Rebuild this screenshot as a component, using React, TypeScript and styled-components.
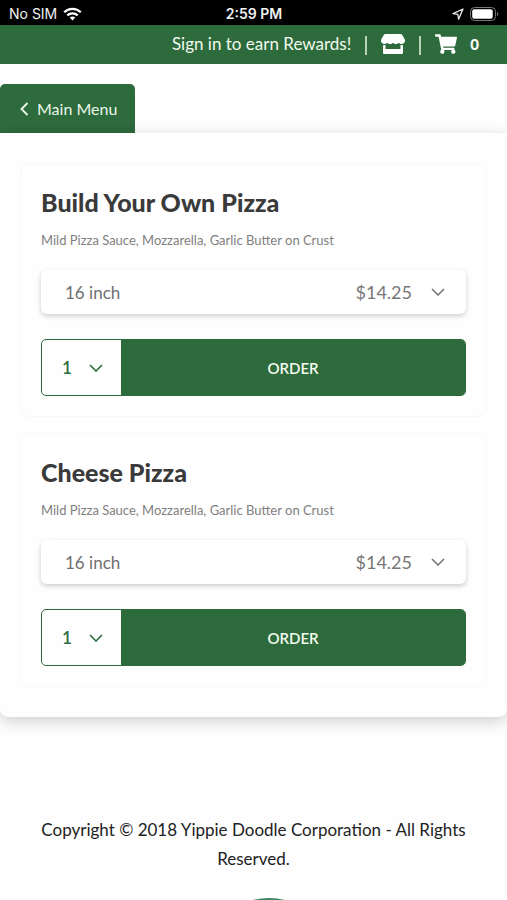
import React from 'react';
import styled, { createGlobalStyle } from 'styled-components';
import { FaShoppingCart, FaStore } from 'react-icons/fa';

const green = '#2d6a3c';

const GlobalStyle = createGlobalStyle`
  *, *::before, *::after { box-sizing: border-box; }
  html { background: #fefefe; }
  body {
    margin: 0;
    overflow-x: hidden;
    font-family: Lato, "Liberation Sans", sans-serif;
    color: #222;
  }
  h2, p { margin: 0; }
  button, select { font: inherit; }
`;

const StatusBar = styled.div`
  display: grid;
  grid-template-columns: 1fr auto 1fr;
  align-items: center;
  height: 25px;
  padding: 2px 8px 0 9px;
  background: #000;
  color: #f2f2f2;
  font-family: Inter, "Liberation Sans", sans-serif;
  font-size: 14px;
  line-height: 20px;
`;

const StatusGroup = styled.div<{ $end?: boolean }>`
  display: flex;
  align-items: center;
  justify-content: ${(p) => (p.$end ? 'flex-end' : 'flex-start')};
  gap: 6px;
`;

const Clock = styled.time`
  font-weight: 600;
`;

const TopBar = styled.header`
  display: flex;
  align-items: center;
  justify-content: flex-end;
  height: 39px;
  padding: 0 28px 2px;
  background: ${green};
  color: #f1faee;
`;

const SignInLink = styled.a`
  color: inherit;
  font-size: 17px;
  line-height: 24px;
  text-decoration: none;
  white-space: nowrap;
`;

const Separator = styled.span`
  width: 2px;
  height: 19px;
  margin: 3px 14px 0;
  background: #b9d3b8;
`;

const IconLink = styled.a`
  display: flex;
  align-items: center;
  gap: 13px;
  color: #fff;
  font-size: 15px;
  font-weight: 900;
  line-height: 20px;
  text-decoration: none;
`;

const TabRow = styled.nav`
  display: flex;
  padding-top: 20px;
`;

const MenuTab = styled.a`
  display: flex;
  align-items: center;
  gap: 8px;
  height: 49px;
  padding: 0 18px 0 19px;
  border-radius: 5px 5px 0 0;
  background: ${green};
  color: #e9f6e8;
  font-size: 16px;
  text-decoration: none;
`;

const Panel = styled.main`
  display: grid;
  gap: 16px;
  padding: 30px 20px;
  border-radius: 0 0 8px 8px;
  background: #fefefe;
  box-shadow: 0 4px 16px rgba(0, 0, 0, 0.2);
  clip-path: inset(-14px -20px -30px);
`;

const Card = styled.article`
  padding: 20px 20px 20px;
  border: 1px solid #f7f7f7;
  border-radius: 10px;
`;

const Title = styled.h2`
  color: #3a3a3a;
  font-size: 25px;
  font-weight: 900;
  line-height: 36px;
`;

const Description = styled.p`
  margin-top: 10px;
  color: #808080;
  font-size: 13px;
  line-height: 20px;
`;

const SizeField = styled.label`
  display: grid;
  grid-template-columns: 1fr auto auto;
  align-items: center;
  height: 44px;
  margin-top: 20px;
  padding-right: 21px;
  border-radius: 6px;
  background: #fff;
  box-shadow: 0 2px 5px rgba(0, 0, 0, 0.2);
  color: #777;
  font-size: 17px;
`;

const PlainSelect = styled.select<{ $tone: string; $inset: number }>`
  grid-area: 1 / 1 / 2 / -1;
  width: 100%;
  height: 100%;
  padding: 0 0 0 ${(p) => p.$inset}px;
  border: 0;
  background: transparent;
  color: ${(p) => p.$tone};
  appearance: none;
  cursor: pointer;
`;

const Price = styled.span`
  grid-area: 1 / 2;
  font-size: 18px;
  pointer-events: none;
`;

const ChevronSlot = styled.span<{ $column: number }>`
  grid-area: 1 / ${(p) => p.$column};
  display: flex;
  margin-left: 19px;
  pointer-events: none;
`;

const OrderRow = styled.form`
  display: flex;
  height: 57px;
  margin-top: 25px;
  overflow: hidden;
  border: 1px solid ${green};
  border-radius: 5px;
`;

const QuantityField = styled.label`
  display: grid;
  grid-template-columns: 1fr auto;
  align-items: center;
  flex: 0 0 79px;
  padding-right: 18px;
  font-size: 17px;
  font-weight: 600;
`;

const OrderButton = styled.button`
  flex: 1;
  border: 0;
  background: ${green};
  color: #f4fbef;
  font-size: 15px;
  font-weight: 600;
  cursor: pointer;
`;

const Footer = styled.footer`
  display: flex;
  flex-direction: column;
  align-items: center;
  padding: 98px 30px 0;
  font-size: 17px;
  line-height: 29px;
  text-align: center;
`;

const FooterLogo = styled.svg`
  display: block;
  margin-top: 25px;
`;

const WifiIcon = () => (
  <svg width="19" height="14" viewBox="0 0 19 14" fill="none" stroke="#fff" strokeWidth="2.3" aria-hidden="true">
    <path d="M1.2 5.3C5.8.7 13.2.7 17.8 5.3" />
    <path d="M4.3 8.4c2.9-2.8 7.5-2.8 10.4 0" />
    <path d="M6.7 10.6c1.6-1.5 4-1.5 5.6 0L9.5 13.6z" fill="#fff" stroke="none" />
  </svg>
);

const LocationIcon = () => (
  <svg width="12" height="12" viewBox="0 0 12 12" fill="none" stroke="#e8e8e8" strokeWidth="1.3" strokeLinejoin="round" aria-hidden="true">
    <path d="M11 1 1 5.6l4.9.7.7 4.9z" />
  </svg>
);

const BatteryIcon = () => (
  <svg width="29" height="14" viewBox="0 0 29 14" aria-hidden="true">
    <rect x="0.5" y="0.5" width="25" height="13" rx="4" fill="none" stroke="#777" />
    <rect x="2.2" y="2.2" width="20.5" height="9.6" rx="2" fill="#fff" />
    <path d="M27 5v4.2c1.8-.8 1.8-3.4 0-4.2z" fill="#777" />
  </svg>
);

const ChevronDown = ({ color }: { color: string }) => (
  <svg width="14" height="8" viewBox="0 0 14 8" fill="none" stroke={color} strokeWidth="1.6" aria-hidden="true">
    <path d="m1 1 6 6 6-6" />
  </svg>
);

const ChevronLeft = () => (
  <svg width="10" height="14" viewBox="0 0 10 14" fill="none" stroke="currentColor" strokeWidth="1.9" aria-hidden="true">
    <path d="M8.5 1 2.5 7l6 6" />
  </svg>
);

interface Item {
  name: string;
  description: string;
  size: string;
  price: string;
}

const items: Item[] = [
  {
    name: 'Build Your Own Pizza',
    description: 'Mild Pizza Sauce, Mozzarella, Garlic Butter on Crust',
    size: '16 inch',
    price: '$14.25',
  },
  {
    name: 'Cheese Pizza',
    description: 'Mild Pizza Sauce, Mozzarella, Garlic Butter on Crust',
    size: '16 inch',
    price: '$14.25',
  },
];

const MenuItem = ({ item }: { item: Item }) => (
  <Card>
    <Title>{item.name}</Title>
    <Description>{item.description}</Description>
    <SizeField>
      <PlainSelect $tone="#6f6f6f" $inset={24} aria-label="Size">
        <option>{item.size}</option>
      </PlainSelect>
      <Price>{item.price}</Price>
      <ChevronSlot $column={3}>
        <ChevronDown color="#777" />
      </ChevronSlot>
    </SizeField>
    <OrderRow onSubmit={(e) => e.preventDefault()}>
      <QuantityField>
        <PlainSelect $tone={green} $inset={20} aria-label="Quantity">
          <option>1</option>
        </PlainSelect>
        <ChevronSlot $column={2}>
          <ChevronDown color={green} />
        </ChevronSlot>
      </QuantityField>
      <OrderButton type="submit">ORDER</OrderButton>
    </OrderRow>
  </Card>
);

export default function App() {
  return (
    <>
      <GlobalStyle />
      <StatusBar>
        <StatusGroup>
          <span>No SIM</span>
          <WifiIcon />
        </StatusGroup>
        <Clock>2:59 PM</Clock>
        <StatusGroup $end>
          <LocationIcon />
          <BatteryIcon />
        </StatusGroup>
      </StatusBar>
      <TopBar>
        <SignInLink href="#sign-in">Sign in to earn Rewards!</SignInLink>
        <Separator />
        <IconLink href="#stores" aria-label="Stores">
          <FaStore size={24} />
        </IconLink>
        <Separator />
        <IconLink href="#cart" aria-label="Cart">
          <FaShoppingCart size={22} />
          <span>0</span>
        </IconLink>
      </TopBar>
      <TabRow>
        <MenuTab href="#menu">
          <ChevronLeft />
          Main Menu
        </MenuTab>
      </TabRow>
      <Panel>
        {items.map((item) => (
          <MenuItem key={item.name} item={item} />
        ))}
      </Panel>
      <Footer>
        <p>Copyright © 2018 Yippie Doodle Corporation - All Rights Reserved.</p>
        <FooterLogo width="142" height="2" viewBox="0 0 142 2" aria-hidden="true">
          <circle cx="86" cy="64" r="64" fill="#3f8562" />
        </FooterLogo>
      </Footer>
    </>
  );
}
